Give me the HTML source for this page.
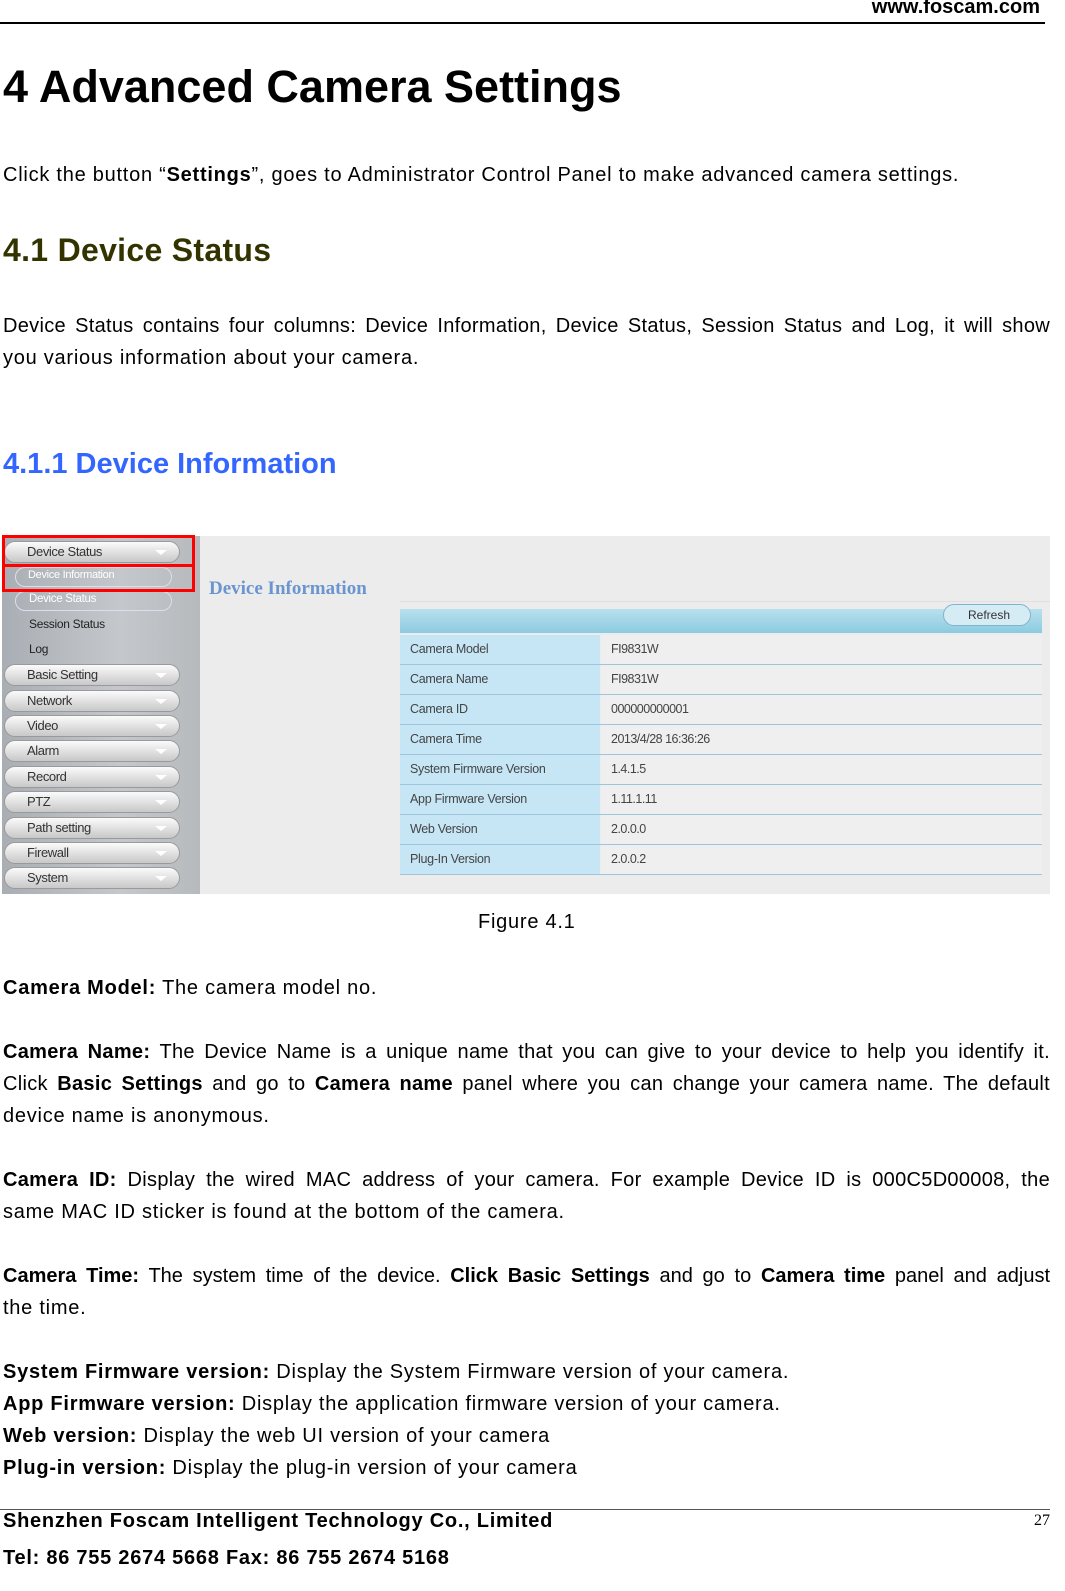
<!DOCTYPE html>
<html><head><meta charset="utf-8"><style>
*{margin:0;padding:0;box-sizing:border-box}
body{width:1065px;height:1591px;position:relative;background:#fff;font-family:"Liberation Sans",Arial,sans-serif;color:#000;overflow:hidden}
.a{position:absolute;white-space:nowrap}
.t{letter-spacing:0.75px}
.p{position:absolute;left:3px;width:1047px;font-size:20px;line-height:32px;text-align:justify;text-align-last:left;letter-spacing:0.75px;white-space:nowrap}
.j{text-align-last:justify;white-space:nowrap;letter-spacing:0.3px;height:32px;overflow:visible}
b{font-weight:bold}
.side{position:absolute;left:2px;top:536px;width:198px;height:358px;background:linear-gradient(90deg,#a9aeb4,#c4c8cc 60%,#b6babd)}
.btn{position:absolute;left:4px;width:176px;height:22px;border-radius:11px;background:linear-gradient(#fbfbfb,#dcdcdc 60%,#c8c8c8);border:1px solid #9a9a9a;font-size:13px;line-height:20px;padding-left:22px;color:#333;letter-spacing:-0.4px}
.btn:after{content:"";position:absolute;right:12px;top:8px;border-left:6px solid transparent;border-right:6px solid transparent;border-top:5px solid #fff}
.sub{position:absolute;font-size:12px;color:#fff;letter-spacing:-0.3px}
.row{position:absolute;left:400px;width:642px;height:30px;border-bottom:1px solid #9dc6dc}
.row .l{position:absolute;left:0;top:0;width:200px;height:29px;background:#c6e6f6;font-size:12.5px;line-height:29px;padding-left:10px;color:#444;letter-spacing:-0.3px}
.row .v{position:absolute;left:201px;top:0;right:0;height:29px;background:#efefef;font-size:12.5px;line-height:29px;padding-left:10px;color:#444;letter-spacing:-0.5px}
</style></head><body>
<div class="a" style="right:25px;top:-4px;font-size:20px;font-weight:bold">www.foscam.com</div>
<div class="a" style="left:0;top:22px;width:1045px;height:2px;background:#000"></div>
<div class="a" style="left:3px;top:61px;font-size:45px;font-weight:bold">4 Advanced Camera Settings</div>
<div class="a t" style="left:3px;top:164px;font-size:20px">Click the button “<b>Settings</b>”, goes to Administrator Control Panel to make advanced camera settings.</div>
<div class="a" style="left:3px;top:232px;font-size:32px;font-weight:bold;color:#333300;letter-spacing:0.3px">4.1 Device Status</div>
<div class="p j" style="top:310px">Device Status contains four columns: Device Information, Device Status, Session Status and Log, it will show</div>
<div class="p" style="top:342px">you various information about your camera.</div>
<div class="a" style="left:3px;top:448px;font-size:29px;font-weight:bold;color:#3366ff">4.1.1 Device Information</div>

<div class="a" style="left:200px;top:536px;width:850px;height:358px;background:#ececec"></div>
<div class="side"></div>
<div class="btn" style="top:541px">Device Status</div>
<div class="a" style="left:15px;top:567px;width:157px;height:20px;border:1px solid #dde;border-radius:10px"></div>
<div class="sub" style="left:28px;top:569px;font-size:11px">Device Information</div>
<div class="a" style="left:15px;top:591px;width:157px;height:20px;border:1px solid #dde;border-radius:10px"></div>
<div class="sub" style="left:29px;top:593px;font-size:11.5px">Device Status</div>
<div class="sub" style="left:29px;top:617px;color:#222">Session Status</div>
<div class="sub" style="left:29px;top:642px;color:#222">Log</div>
<div class="btn" style="top:664px">Basic Setting</div>
<div class="btn" style="top:690px">Network</div>
<div class="btn" style="top:715px">Video</div>
<div class="btn" style="top:740px">Alarm</div>
<div class="btn" style="top:766px">Record</div>
<div class="btn" style="top:791px">PTZ</div>
<div class="btn" style="top:817px">Path setting</div>
<div class="btn" style="top:842px">Firewall</div>
<div class="btn" style="top:867px">System</div>
<div class="a" style="left:2px;top:535px;width:193px;height:32px;border:3px solid #f00"></div>
<div class="a" style="left:2px;top:566px;width:193px;height:26px;border:3px solid #f00;border-top:0"></div>
<div class="a" style="left:209px;top:578px;font-family:'Liberation Serif',serif;font-size:19px;font-weight:bold;color:#6a95cf">Device Information</div>
<div class="a" style="left:400px;top:601px;width:650px;height:1px;background:#e0e0e0"></div>
<div class="a" style="left:400px;top:609px;width:642px;height:24px;background:linear-gradient(#b9e0ee,#8ccbe0)"></div>
<div class="a" style="left:943px;top:604px;width:88px;height:22px;border:1px solid #7fb5cc;border-radius:11px;background:#d6ecf4;font-size:12px;line-height:20px;padding-left:24px;color:#333">Refresh</div>
<div class="row" style="top:635px"><div class="l">Camera Model</div><div class="v">FI9831W</div></div>
<div class="row" style="top:665px"><div class="l">Camera Name</div><div class="v">FI9831W</div></div>
<div class="row" style="top:695px"><div class="l">Camera ID</div><div class="v">000000000001</div></div>
<div class="row" style="top:725px"><div class="l">Camera Time</div><div class="v">2013/4/28 16:36:26</div></div>
<div class="row" style="top:755px"><div class="l">System Firmware Version</div><div class="v">1.4.1.5</div></div>
<div class="row" style="top:785px"><div class="l">App Firmware Version</div><div class="v">1.11.1.11</div></div>
<div class="row" style="top:815px"><div class="l">Web Version</div><div class="v">2.0.0.0</div></div>
<div class="row" style="top:845px"><div class="l">Plug-In Version</div><div class="v">2.0.0.2</div></div>

<div class="a t" style="left:478px;top:911px;font-size:20px">Figure 4.1</div>
<div class="p" style="top:972px"><b>Camera Model:</b> The camera model no.</div>
<div class="p j" style="top:1036px"><b>Camera Name:</b> The Device Name is a unique name that you can give to your device to help you identify it.</div>
<div class="p j" style="top:1068px">Click <b>Basic Settings</b> and go to <b>Camera name</b> panel where you can change your camera name. The default</div>
<div class="p" style="top:1100px">device name is anonymous.</div>
<div class="p j" style="top:1164px"><b>Camera ID:</b> Display the wired MAC address of your camera. For example Device ID is 000C5D00008, the</div>
<div class="p" style="top:1196px">same MAC ID sticker is found at the bottom of the camera.</div>
<div class="p j" style="top:1260px;letter-spacing:0"><b>Camera Time:</b> The system time of the device. <b>Click Basic Settings</b> and go to <b>Camera time</b> panel and adjust</div>
<div class="p" style="top:1292px">the time.</div>
<div class="p" style="top:1356px"><b>System Firmware version:</b> Display the System Firmware version of your camera.</div>
<div class="p" style="top:1388px"><b>App Firmware version:</b> Display the application firmware version of your camera.</div>
<div class="p" style="top:1420px"><b>Web version:</b> Display the web UI version of your camera</div>
<div class="p" style="top:1452px"><b>Plug-in version:</b> Display the plug-in version of your camera</div>

<div class="a" style="left:0;top:1509px;width:1050px;height:1px;background:#555"></div>
<div class="a t" style="left:3px;top:1510px;font-size:20px;font-weight:bold">Shenzhen Foscam Intelligent Technology Co., Limited</div>
<div class="a" style="right:15px;top:1512px;font-family:'Liberation Serif',serif;font-size:16px">27</div>
<div class="a t" style="left:3px;top:1547px;font-size:20px;font-weight:bold">Tel: 86 755 2674 5668 Fax: 86 755 2674 5168</div>
</body></html>
